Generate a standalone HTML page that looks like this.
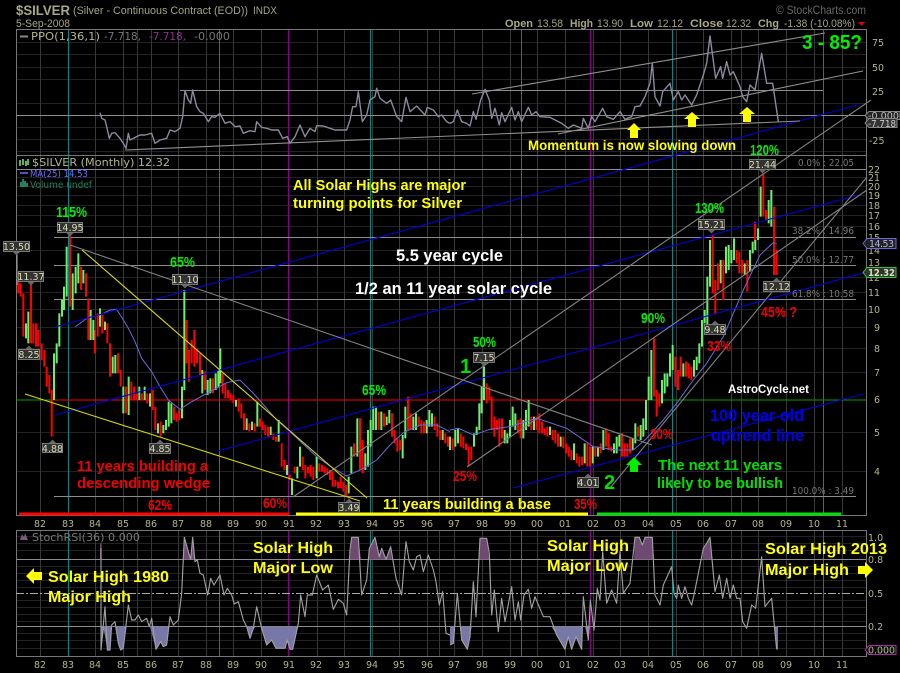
<!DOCTYPE html>
<html><head><meta charset="utf-8"><title>$SILVER</title>
<style>
html,body{margin:0;padding:0;background:#000;width:900px;height:673px;overflow:hidden}
svg{display:block}
text{font-family:"Liberation Sans",sans-serif}
.s{font-family:"DejaVu Sans",sans-serif;font-size:9.5px;fill:#b4b48c}
.h{font-size:11px;fill:#a4a484}
.f{font-family:"DejaVu Sans",sans-serif;font-size:9.5px;fill:#777}
.g{fill:#00f000;font-weight:bold;font-size:14.5px}
.r{fill:#f00000;font-weight:bold;font-size:14.5px}
.y{fill:#ffff00;font-weight:bold;font-size:14.5px}
.y2{fill:#ffff00;font-weight:bold;font-size:15.5px}
.t{font-family:"DejaVu Sans",sans-serif;font-size:9.5px;fill:#ddddb4;text-anchor:middle}
.bx{fill:#333;stroke:#777;stroke-width:1}
</style></head><body>
<svg width="900" height="673" viewBox="0 0 900 673" xmlns="http://www.w3.org/2000/svg">
<rect width="900" height="673" fill="#000"/>

<!-- minor horizontal grid -->
<path fill="none" stroke="#222" d="M16 42.5H866M16 54.5H866M16 67.5H866M16 79.5H866M16 103.5H866M16 127.5H866M16 139.5H866M16 151.5H866
M16 177.5H866M16 186.5H866M16 195.5H866M16 205.5H866M16 215.5H866M16 226.5H866M16 250.5H866M16 277.5H866M16 292.5H866M16 309.5H866M16 327.5H866M16 348.5H866M16 372.5H866M16 432.5H866M16 471.5H866
M16 536.5H866M16 543.5H866M16 550.5H866M16 566.5H866M16 573.5H866M16 580.5H866M16 587.5H866M16 600.5H866M16 607.5H866M16 614.5H866M16 621.5H866M16 633.5H866M16 640.5H866M16 648.5H866"/>
<!-- vertical grid -->
<path fill="none" stroke="#383838" d="M40.5 29V515M95.5 29V515M123.5 29V515M151.5 29V515M178.5 29V515M206.5 29V515M233.5 29V515M261.5 29V515M317.5 29V515M344.5 29V515M372.5 29V515M399.5 29V515M427.5 29V515M454.5 29V515M482.5 29V515M510.5 29V515M537.5 29V515M565.5 29V515M593.5 29V515M620.5 29V515M648.5 29V515M676.5 29V515M703.5 29V515M731.5 29V515M758.5 29V515M786.5 29V515M814.5 29V515M842.5 29V515
M40.5 530V656M95.5 530V656M123.5 530V656M151.5 530V656M178.5 530V656M206.5 530V656M233.5 530V656M261.5 530V656M317.5 530V656M344.5 530V656M372.5 530V656M399.5 530V656M427.5 530V656M454.5 530V656M482.5 530V656M510.5 530V656M537.5 530V656M565.5 530V656M593.5 530V656M620.5 530V656M648.5 530V656M676.5 530V656M703.5 530V656M731.5 530V656M758.5 530V656M786.5 530V656M814.5 530V656M842.5 530V656"/>
<!-- teal / purple cycle verticals -->
<path fill="none" stroke="#008888" d="M68.5 29V515M219.5 29V515M370.5 29V515M521.5 29V515M672.5 29V515M823.5 29V515M68.5 530V656M219.5 530V656M370.5 530V656M521.5 530V656M672.5 530V656M823.5 530V656"/>
<path fill="none" stroke="#880088" d="M137.5 29V515M288.5 29V515M439.5 29V515M590.5 29V515M741.5 29V515M137.5 530V656M288.5 530V656M439.5 530V656M590.5 530V656M741.5 530V656"/>

<!-- panel frames -->
<path fill="none" stroke="#777" d="M16.5 29.5H866.5V155.5H16.5ZM16.5 155.5V515.5H866.5V155.5M16.5 530.5H866.5V656.5H16.5Z"/>
<!-- horizontal levels -->
<path fill="none" stroke="#8c8c8c" d="M180 90.5H823M16 115.5H866M16 169.5H866M54 237.5H856M54 265.5H856M54 299.5H856M54 496.5H856M16 559.5H866M16 626.5H866"/>
<path fill="none" stroke="#aaa" stroke-dasharray="8 2 2 2" d="M16 593.5H866"/>
<path stroke="#00a000" d="M16 400H53M647 400H866"/>
<path stroke="#ff0000" d="M53 400H647"/>

<!-- year bars -->
<path stroke="#ff0000" stroke-width="3" d="M19 514H289"/>
<path stroke="#ffff00" stroke-width="3" d="M296 514H588"/>
<path stroke="#00e000" stroke-width="3" d="M597 514H841"/>

<!-- left candles -->
<path stroke="#aaa" d="M17 252V285"/>
<g transform="translate(0,230) scale(.33333)" fill="none" stroke-width="6">
<path stroke="#ff0000" d="M55 150V190M62 160V200M70 190V320M93 165V340M100 280V340M108 280V350M115 300V350M125 340V390M133 360V410M140 410V470M148 435V490M155 480V620M210 5V230M243 110V180M258 130V200M265 205V330M285 300V370M293 250V320M307 255V310M322 280V340M330 340V440M354 370V430M362 420V470M378 470V550M394 455V510M402 470V510M410 490V510M426 490V510M442 490V520M458 480V540M466 530V600M482 575V620M522 530V570M530 550V575M538 540V570M560 270V400M567 360V455M575 330V400M583 300V410M591 355V400M600 370V435M615 425V480M639 445V490M668 430V490M676 460V505M684 480V505M692 490V510M700 495V520M716 505V545M724 520V565M732 550V600M748 580V605M764 580V605M780 565V590M788 575V600M796 585V615M804 590V620M820 610V630M828 620V635M845 640V710M853 690V720M869 735V750M884 710V730M908 680V720M916 705V745M924 710V730M932 705V740M940 710V750M958 700V725M966 705V725M974 710V730M982 715V735M990 720V750M998 725V770M1006 750V770M1014 755V775M1022 740V775M1030 755V785M1038 765V800M1062 640V680M1080 565V720M1088 630V730M1136 545V600M1152 550V590M1176 550V620M1184 600V640M1192 625V665M1200 630V660M1224 500V600M1232 550V600M1256 560V590M1264 570V610M1272 575V610M1304 560V600M1312 580V620M1320 600V630M1336 610V640M1344 620V650"/>
<path stroke="#6cf06c" d="M78 280V325M85 245V340M162 370V510M170 340V400M178 250V350M186 210V260M192 170V240M200 50V200M218 130V240M227 110V190M235 70V160M250 120V160M272 240V330M280 270V330M300 235V290M315 275V300M338 380V430M346 375V430M370 470V550M386 440V555M418 470V510M434 470V510M450 490V530M474 580V610M490 585V610M498 570V600M506 515V590M514 520V580M546 470V565M553 180V480M607 420V490M623 450V495M631 445V490M647 430V480M655 420V470M661 355V460M708 510V530M740 565V600M756 575V600M772 515V590M812 590V615M836 570V635M861 705V735M876 745V795M892 710V745M900 650V710M950 680V745M1046 740V790M1054 650V730M1072 565V680M1096 670V720M1104 600V710M1112 570V650M1120 530V600M1128 530V600M1144 545V600M1160 560V585M1168 540V580M1208 615V685M1216 530V625M1240 560V600M1248 550V600M1280 570V610M1288 540V590M1296 550V590M1328 600V630"/>
<path stroke="#6a6ad8" stroke-width="3" d="M226 290L265 262 300 255 330 240 350 238 370 270 385 295 405 335 425 385 455 425 480 470 505 510 540 538 575 515 640 480 680 458 720 450 765 495 830 570 870 605 950 680 1000 715 1040 738 1085 718 1130 690 1170 645 1210 608 1260 585 1310 585 1350 605"/>
</g>
<!-- right candles -->
<g transform="translate(450,230) scale(.33333)" fill="none" stroke-width="6">
<path stroke="#ff0000" d="M8 625V660M32 610V650M40 620V655M48 640V660M56 650V710M64 650V690M110 460V520M118 470V510M125 500V600M133 560V620M141 570V600M148 565V650M156 565V625M204 570V610M212 565V625M244 560V600M260 560V600M268 550V610M276 575V610M284 595V615M292 590V620M308 600V630M316 600V640M324 610V650M340 620V655M348 640V670M356 650V680M364 660V690M380 670V700M388 680V710M396 680V705M412 640V710M420 650V710M436 650V680M452 640V670M468 595V650M476 610V660M484 650V665M516 610V680M524 640V680M532 640V680M540 625V670M564 590V620M612 325V500M620 480V560M628 490V530M676 380V470M684 420V480M692 380V440M708 395V440M716 400V445M724 410V450M788 15V190M796 150V250M804 100V180M820 90V210M860 60V100M868 65V130M876 90V130M892 90V185M915 -25V40M940 -170V-40M948 -60V-30M972 -70V135M980 60V135"/>
<path stroke="#6cf06c" d="M0 620V660M16 600V650M24 595V640M72 610V650M80 590V615M88 520V600M95 470V550M102 410V510M164 600V640M172 610V640M180 570V620M188 530V590M196 550V600M220 570V625M228 540V600M236 510V590M252 560V600M300 590V615M332 620V650M372 640V690M404 640V700M428 650V700M444 650V680M460 600V660M492 640V670M500 620V670M508 615V650M548 625V660M556 580V640M572 585V630M580 565V620M588 510V600M596 440V510M604 360V510M636 450V520M644 430V490M652 430V470M660 370V440M668 345V420M700 400V440M732 390V440M740 380V420M748 340V400M756 270V350M764 240V280M772 140V300M780 30V170M812 90V160M828 50V130M836 45V120M844 60V100M852 25V90M884 100V135M900 60V125M908 35V70M916 30V60M924 -5V30M932 -130V-40M956 -90V-20M964 -120V-10"/>
<path stroke="#6a6ad8" stroke-width="3" d="M0 600L25 595 70 615 120 598 180 590 260 565 350 595 430 650 500 660 550 660 590 625 640 570 680 520 730 450 770 400 820 320 880 180 930 75 970 38 980 40"/>
</g>

<!-- trend lines -->
<g fill="none" stroke-width="1.1">
<path stroke="#0000d8" d="M55 327L857 105M55 415L858 195M218 451L863 273M513 488L863 394"/>
<path stroke="#808080" d="M70 245L652 445M293 497L871 100M467 467L867 190M610 488L867 177"/>
<path stroke="#d8d800" d="M82 250L367 498M25 394L360 501"/>
<path stroke="#909090" d="M125 150L800 121M472 94L825 33M558 134L863 71"/>
</g>

<!-- PPO -->
<g fill="none" stroke="#8a8a9c" stroke-linejoin="round">
<path transform="scale(.33333)" stroke-width="4.2" d="M300 338L305 355 315 360 320 380 328 415 335 400 345 398 360 415 370 430 378 445 385 400 390 420 410 410 420 405 435 405 455 400 465 430 480 420 500 415 510 390 525 395 540 385 548 350 555 272 565 300 572 310 578 270 590 320 600 335 610 340 625 365 635 350 645 352 660 340 675 370 690 365 705 380 720 378 730 400 750 392 765 395 770 365 785 382 800 385 815 390 835 390 848 415 862 410 870 430 885 410 900 375 915 410 930 385 945 395 950 377 970 378 990 385 1005 390 1040 390 1050 360 1058 320 1068 320 1075 275 1087 365 1100 345 1110 300 1125 290 1130 265 1140 295 1160 310 1172 300 1190 350 1205 365 1218 292 1230 335 1250 318 1275 345 1282 322 1300 330 1315 350 1325 345 1340 365 1350 370"/>
<path transform="translate(450,0) scale(.33333)" stroke-width="4.2" d="M0 370L10 365 22 330 35 365 50 370 60 378 70 335 78 358 92 300 105 268 118 300 125 355 135 325 148 375 155 338 165 365 185 322 195 360 205 335 215 365 235 322 245 345 258 335 270 350 300 352 335 370 355 385 370 375 395 385 400 355 415 385 425 350 435 365 458 325 470 350 490 358 510 335 525 358 545 350 555 320 570 318 585 290 600 250 607 190 615 290 630 318 638 275 660 250 670 300 685 275 695 300 705 285 725 315 740 285 760 225 770 190 780 108 797 235 812 200 818 235 830 185 840 225 850 215 870 260 878 290 890 305 900 255 915 270 935 160 950 250 968 250 985 365"/>
</g>

<!-- Stoch -->
<g transform="translate(0,520) scale(.33333)">
<path fill="#7878a8" d="M303 320V390L313 320ZM310 320L322 390 330 390 335 320ZM348 320L355 370 362 390 370 385 380 320ZM450 320L468 388 482 365 490 380 500 375 507 320ZM740 320L750 355 760 325 770 320ZM783 320L800 375 815 360 828 385 855 385 862 360 870 388 878 388 893 320Z"/>
<path fill="#6e4a72" d="M300 70H305V118H300ZM548 118L553 52 565 95 572 118 578 52 585 118ZM1050 118L1055 52 1075 52 1083 118ZM1105 118L1108 85 1125 52 1138 110 1145 85 1158 118 1172 80 1176 118Z"/>
<path fill="none" stroke="#a0a0a0" stroke-width="3.4" stroke-linejoin="round" d="M303 85L303 390 315 260 322 390 330 390 335 315 345 305 355 370 362 390 370 385 385 255 395 300 405 300 415 285 425 305 440 295 448 320 455 295 468 388 482 365 490 380 500 375 510 290 520 315 535 300 545 220 553 52 565 95 572 118 578 52 585 125 592 120 600 160 610 165 623 225 632 175 642 195 660 165 672 225 682 205 695 225 703 252 715 245 730 300 740 320 750 355 760 325 770 260 785 325 800 375 815 360 828 385 855 385 862 360 870 388 878 388 895 310 902 225 915 290 922 225 937 225 950 165 968 210 985 195 1000 268 1015 238 1030 250 1040 285 1050 90 1055 52 1075 52 1085 225 1100 180 1108 85 1125 52 1138 110 1145 85 1158 118 1172 80 1188 175 1205 225 1218 65 1228 125 1240 150 1250 110 1260 105 1270 155 1285 105 1300 150 1308 185 1318 255 1328 215 1338 340 1350 345"/>
</g>
<g transform="translate(450,520) scale(.33333)">
<path fill="#7878a8" d="M0 320V375L10 370 13 320ZM30 320L35 360 52 388 60 350 65 320ZM305 320L320 345 345 388 355 350 365 388 378 350 395 388 397 320ZM405 320L415 360 420 320ZM972 320L980 388 984 388V320Z"/>
<path fill="#6e4a72" d="M85 118L90 55 110 55 118 118ZM552 118L555 52 568 52 577 75 585 52 607 52 612 118ZM757 118L760 85 770 70 780 52 787 118Z"/>
<path fill="none" stroke="#a0a0a0" stroke-width="3.4" stroke-linejoin="round" d="M0 375L10 370 22 220 35 360 52 388 60 350 70 185 78 290 90 55 110 55 118 100 125 285 133 210 145 335 155 235 165 305 185 200 195 300 205 245 212 300 222 225 235 208 245 265 255 230 280 290 300 290 320 345 345 388 355 350 365 388 378 350 395 388 400 230 415 360 421 240 432 330 442 205 450 240 458 95 470 250 485 210 500 250 510 95 520 220 540 190 555 52 568 52 577 75 585 52 607 52 615 225 630 255 640 195 665 140 672 220 680 235 685 195 695 235 705 200 715 235 725 255 735 210 760 85 770 70 780 52 795 215 808 165 818 235 830 175 840 235 850 195 860 235 870 235 878 305 890 325 905 255 917 265 935 110 945 260 965 235 980 388"/>
</g>

<!-- Header -->
<text x="16" y="15" font-weight="bold" font-size="13.5" fill="#a8a884" textLength="54" lengthAdjust="spacingAndGlyphs">$SILVER</text>
<text x="73" y="14" class="h" textLength="175" lengthAdjust="spacingAndGlyphs">(Silver - Continuous Contract (EOD))</text>
<text x="253" y="14" class="h" font-size="10" textLength="24" lengthAdjust="spacingAndGlyphs">INDX</text>
<text x="16" y="27" class="h" textLength="54" lengthAdjust="spacingAndGlyphs">5-Sep-2008</text>
<text x="776" y="14" class="h" style="fill:#666;font-size:12px" textLength="90" lengthAdjust="spacingAndGlyphs">© StockCharts.com</text>
<g font-size="11" fill="#a8a884" font-weight="bold">
<text x="505" y="27" textLength="28" lengthAdjust="spacingAndGlyphs">Open</text><text x="570" y="27" textLength="23" lengthAdjust="spacingAndGlyphs">High</text><text x="630" y="27" textLength="23" lengthAdjust="spacingAndGlyphs">Low</text><text x="690" y="27" textLength="33" lengthAdjust="spacingAndGlyphs">Close</text><text x="758" y="27" textLength="21" lengthAdjust="spacingAndGlyphs">Chg</text>
</g>
<text class="h" x="537" y="27" textLength="26" lengthAdjust="spacingAndGlyphs">13.58</text><text class="h" x="597" y="27" textLength="26" lengthAdjust="spacingAndGlyphs">13.90</text><text class="h" x="657" y="27" textLength="26" lengthAdjust="spacingAndGlyphs">12.12</text><text class="h" x="726" y="27" textLength="25" lengthAdjust="spacingAndGlyphs">12.32</text><text class="h" x="784" y="27" textLength="71" lengthAdjust="spacingAndGlyphs">-1.38 (-10.08%)</text>
<path fill="#e00000" d="M858 22H865L861.5 26Z"/>

<!-- Legends -->
<path stroke="#888" stroke-width="2" d="M20 36.5H28"/>
<text x="31" y="40" class="s" style="font-size:10.5px" textLength="69" lengthAdjust="spacingAndGlyphs">PPO(1,36,1)</text>
<text x="104" y="40" class="f" style="font-size:10.5px" textLength="37" lengthAdjust="spacingAndGlyphs">-7.718,</text>
<text x="149" y="40" class="s" style="fill:#903090;font-size:10.5px" textLength="37" lengthAdjust="spacingAndGlyphs">-7.718,</text>
<text x="194" y="40" class="f" style="font-size:10.5px" textLength="36" lengthAdjust="spacingAndGlyphs">-0.000</text>
<path stroke="#80ff80" stroke-width="1.4" fill="none" d="M20 160V166M23 159V165M26 161V166M28 159V165"/>
<text x="32" y="166" class="s" style="font-size:10.5px" textLength="138" lengthAdjust="spacingAndGlyphs">$SILVER (Monthly) 12.32</text>
<path stroke="#6a6aff" stroke-width="1.5" d="M20 173H28"/>
<text x="30" y="177" class="s" style="fill:#6a6aff" textLength="58" lengthAdjust="spacingAndGlyphs">MA(25) 14.53</text>
<path fill="#208060" d="M20 187V182H22V179H24V181H26V183H28V187Z"/>
<text x="30" y="188" class="s" style="fill:#208060" textLength="62" lengthAdjust="spacingAndGlyphs">Volume undef</text>
<path fill="#7a5a80" d="M20 540L22 534 24 537 25 533 28 540Z"/>
<text x="32" y="541" class="f" style="font-size:10.5px" textLength="108" lengthAdjust="spacingAndGlyphs">StochRSI(36) 0.000</text>

<!-- Right axes -->
<g>
<text class="s" x="872" y="46">75</text><text class="s" x="872" y="71">50</text><text class="s" x="872" y="95">25</text><text class="s" x="869" y="144">-25</text>
<text class="s" x="868" y="173">22</text><text class="s" x="868" y="181">21</text><text class="s" x="868" y="190">20</text><text class="s" x="868" y="199">19</text><text class="s" x="868" y="209">18</text><text class="s" x="868" y="219">17</text><text class="s" x="868" y="230">16</text><text class="s" x="868" y="241">15</text><text class="s" x="868" y="254">14</text><text class="s" x="868" y="266">13</text><text class="s" x="868" y="281">12</text><text class="s" x="868" y="296">11</text><text class="s" x="868" y="313">10</text>
<text class="s" x="874" y="331">9</text><text class="s" x="874" y="352">8</text><text class="s" x="874" y="376">7</text><text class="s" x="874" y="403">6</text><text class="s" x="874" y="436">5</text><text class="s" x="874" y="475">4</text>
<text class="s" x="868" y="541">1.0</text><text class="s" x="868" y="563">0.8</text><text class="s" x="868" y="597">0.5</text><text class="s" x="868" y="630">0.2</text>
</g>
<!-- Right tags -->
<path fill="#222" stroke="#888" d="M869 111.5H900V119.5H869L865 115.5Z"/>
<text x="868" y="119" class="s" style="fill:#bbb" textLength="31" lengthAdjust="spacingAndGlyphs">-0.000</text>
<path fill="#333" stroke="#888" d="M869 118.5H897V127.5H869L865 123Z"/>
<text x="868" y="127" class="s" style="fill:#ccc" textLength="28" lengthAdjust="spacingAndGlyphs">-7.718</text>
<path fill="#222" stroke="#6a6ad8" d="M867 238.5H896V248.5H867L863 243.5Z"/>
<text x="869" y="247" class="s" style="fill:#b0b0e0" textLength="25">14.53</text>
<path fill="#2a3a2a" stroke="#40c040" d="M867 267.5H896V277.5H867L863 272.5Z"/>
<text x="868" y="276" class="s" style="fill:#e0e0c0;font-weight:bold" textLength="27" lengthAdjust="spacingAndGlyphs">12.32</text>
<path fill="#111" stroke="#a030a0" d="M869 645.5H896V654.5H869L865 650Z"/>
<text x="868" y="653.5" class="s" textLength="27" lengthAdjust="spacingAndGlyphs">0.000</text>

<!-- Year labels -->
<g>
<text class="s" x="34" y="527">82</text><text class="s" x="62" y="527">83</text><text class="s" x="89" y="527">84</text><text class="s" x="117" y="527">85</text><text class="s" x="145" y="527">86</text><text class="s" x="172" y="527">87</text><text class="s" x="200" y="527">88</text><text class="s" x="227" y="527">89</text><text class="s" x="255" y="527">90</text><text class="s" x="283" y="527">91</text><text class="s" x="310" y="527">92</text><text class="s" x="338" y="527">93</text><text class="s" x="366" y="527">94</text><text class="s" x="393" y="527">95</text><text class="s" x="421" y="527">96</text><text class="s" x="448" y="527">97</text><text class="s" x="476" y="527">98</text><text class="s" x="504" y="527">99</text><text class="s" x="531" y="527">00</text><text class="s" x="559" y="527">01</text><text class="s" x="587" y="527">02</text><text class="s" x="614" y="527">03</text><text class="s" x="642" y="527">04</text><text class="s" x="670" y="527">05</text><text class="s" x="697" y="527">06</text><text class="s" x="725" y="527">07</text><text class="s" x="752" y="527">08</text><text class="s" x="780" y="527">09</text><text class="s" x="808" y="527">10</text><text class="s" x="836" y="527">11</text>
</g>
<g>
<text class="s" x="34" y="668">82</text><text class="s" x="62" y="668">83</text><text class="s" x="89" y="668">84</text><text class="s" x="117" y="668">85</text><text class="s" x="145" y="668">86</text><text class="s" x="172" y="668">87</text><text class="s" x="200" y="668">88</text><text class="s" x="227" y="668">89</text><text class="s" x="255" y="668">90</text><text class="s" x="283" y="668">91</text><text class="s" x="310" y="668">92</text><text class="s" x="338" y="668">93</text><text class="s" x="366" y="668">94</text><text class="s" x="393" y="668">95</text><text class="s" x="421" y="668">96</text><text class="s" x="448" y="668">97</text><text class="s" x="476" y="668">98</text><text class="s" x="504" y="668">99</text><text class="s" x="531" y="668">00</text><text class="s" x="559" y="668">01</text><text class="s" x="587" y="668">02</text><text class="s" x="614" y="668">03</text><text class="s" x="642" y="668">04</text><text class="s" x="670" y="668">05</text><text class="s" x="697" y="668">06</text><text class="s" x="725" y="668">07</text><text class="s" x="752" y="668">08</text><text class="s" x="780" y="668">09</text><text class="s" x="808" y="668">10</text><text class="s" x="836" y="668">11</text>
</g>

<!-- Price boxes -->
<path fill="#666" d="M66 232.5H74L70 236.5ZM12.5 251.5H20.5L16.5 255.5ZM27 281.5H35L31 285.5ZM181 284.5H189L185 288.5ZM480 362.5H488L484 366.5ZM707.5 229.5H715.5L711.5 233.5ZM758.5 169.5H766.5L762.5 173.5ZM25 349.5H33L29 345.5ZM48.5 443.5H56.5L52.5 439.5ZM156 443.5H164L160 439.5ZM345 502.5H353L349 498.5ZM584 477.5H592L588 473.5ZM711 324.5H719L715 320.5ZM772.5 281.5H780.5L776.5 277.5Z"/>
<g>
<rect class="bx" x="57.5" y="222.5" width="25" height="10"/><text class="t" x="70" y="231">14.95</text>
<rect class="bx" x="3.5" y="241.5" width="26" height="10"/><text class="t" x="16.5" y="250">13.50</text>
<rect class="bx" x="18.5" y="271.5" width="25" height="10"/><text class="t" x="31" y="280">11.37</text>
<rect class="bx" x="18.5" y="349.5" width="21" height="10"/><text class="t" x="29" y="358">8.25</text>
<rect class="bx" x="42.5" y="443.5" width="20" height="9"/><text class="t" x="52.5" y="452">4.88</text>
<rect class="bx" x="149.5" y="443.5" width="21" height="10"/><text class="t" x="160" y="452">4.85</text>
<rect class="bx" x="172.5" y="274.5" width="25" height="10"/><text class="t" x="185" y="283">11.10</text>
<rect class="bx" x="338.5" y="502.5" width="21" height="10"/><text class="t" x="349" y="511">3.49</text>
<rect class="bx" x="473.5" y="352.5" width="21" height="10"/><text class="t" x="484" y="361">7.15</text>
<rect class="bx" x="577.5" y="477.5" width="21" height="10"/><text class="t" x="588" y="486">4.01</text>
<rect class="bx" x="704.5" y="324.5" width="21" height="10"/><text class="t" x="715" y="333">9.48</text>
<rect class="bx" x="763.5" y="281.5" width="26" height="10"/><text class="t" x="776.5" y="290">12.12</text>
<rect class="bx" x="698.5" y="219.5" width="26" height="10"/><text class="t" x="711.5" y="228">15.21</text>
<rect class="bx" x="749.5" y="159.5" width="26" height="10"/><text class="t" x="762.5" y="168">21.44</text>
</g>

<!-- Fib labels -->
<text class="f" x="798" y="166" textLength="56" lengthAdjust="spacingAndGlyphs">0.0% : 22.05</text>
<text class="f" x="792" y="234" textLength="62" lengthAdjust="spacingAndGlyphs">38.2% : 14.96</text>
<text class="f" x="792" y="263" textLength="62" lengthAdjust="spacingAndGlyphs">50.0% : 12.77</text>
<text class="f" x="792" y="297" textLength="62" lengthAdjust="spacingAndGlyphs">61.8% : 10.58</text>
<text class="f" x="792" y="494" textLength="62" lengthAdjust="spacingAndGlyphs">100.0% : 3.49</text>

<!-- Annotations -->
<text x="802" y="49" fill="#00f000" font-weight="bold" font-size="20" textLength="60" lengthAdjust="spacingAndGlyphs">3 - 85?</text>
<text x="528" y="150" class="y" style="font-size:13.5px" textLength="208" lengthAdjust="spacingAndGlyphs">Momentum is now slowing down</text>
<text x="293" y="190" class="y" textLength="173" lengthAdjust="spacingAndGlyphs">All Solar Highs are major</text>
<text x="293" y="208" class="y" textLength="169" lengthAdjust="spacingAndGlyphs">turning points for Silver</text>
<text x="396" y="261" fill="#fff" font-weight="bold" font-size="16.5" textLength="107" lengthAdjust="spacingAndGlyphs">5.5 year cycle</text>
<text x="355" y="294" fill="#fff" font-weight="bold" font-size="16.5" textLength="197" lengthAdjust="spacingAndGlyphs">1/2 an 11 year solar cycle</text>
<text x="56" y="217" class="g" textLength="31" lengthAdjust="spacingAndGlyphs">115%</text>
<text x="170" y="267" class="g" textLength="25" lengthAdjust="spacingAndGlyphs">65%</text>
<text x="362" y="395" class="g" textLength="24" lengthAdjust="spacingAndGlyphs">65%</text>
<text x="473" y="347" class="g" textLength="23" lengthAdjust="spacingAndGlyphs">50%</text>
<text x="641" y="323" class="g" textLength="24" lengthAdjust="spacingAndGlyphs">90%</text>
<text x="695" y="213" class="g" textLength="29" lengthAdjust="spacingAndGlyphs">130%</text>
<text x="750" y="155" class="g" textLength="29" lengthAdjust="spacingAndGlyphs">120%</text>
<text x="460" y="373" fill="#00e000" font-weight="bold" font-size="20">1</text>
<text x="604" y="489" fill="#00e000" font-weight="bold" font-size="20">2</text>
<text x="761" y="317" class="r" textLength="36" lengthAdjust="spacingAndGlyphs">45% ?</text>
<text x="707" y="351" class="r" textLength="24" lengthAdjust="spacingAndGlyphs">33%</text>
<text x="650" y="439" class="r" textLength="23" lengthAdjust="spacingAndGlyphs">30%</text>
<text x="453" y="481" class="r" textLength="24" lengthAdjust="spacingAndGlyphs">25%</text>
<text x="574" y="509" class="r" textLength="23" lengthAdjust="spacingAndGlyphs">35%</text>
<text x="148" y="510" class="r" textLength="24" lengthAdjust="spacingAndGlyphs">62%</text>
<text x="263" y="508" class="r" textLength="24" lengthAdjust="spacingAndGlyphs">60%</text>
<text x="77" y="471" class="r" style="font-size:15px" textLength="131" lengthAdjust="spacingAndGlyphs">11 years building a</text>
<text x="77" y="488" class="r" style="font-size:15px" textLength="133" lengthAdjust="spacingAndGlyphs">descending wedge</text>
<text x="383" y="509" class="y" textLength="168" lengthAdjust="spacingAndGlyphs">11 years building a base</text>
<text x="728" y="393" fill="#fff" font-weight="bold" font-size="11.5" textLength="81" lengthAdjust="spacingAndGlyphs">AstroCycle.net</text>
<text x="710" y="421" fill="#0000f0" font-weight="bold" font-size="17" textLength="94" lengthAdjust="spacingAndGlyphs">100 year old</text>
<text x="711" y="441" fill="#0000f0" font-weight="bold" font-size="17" textLength="93" lengthAdjust="spacingAndGlyphs">uptrend line</text>
<text x="658" y="470" fill="#00e000" font-weight="bold" font-size="15" textLength="124" lengthAdjust="spacingAndGlyphs">The next 11 years</text>
<text x="657" y="488" fill="#00e000" font-weight="bold" font-size="15" textLength="126" lengthAdjust="spacingAndGlyphs">likely to be bullish</text>

<!-- Arrows -->
<path fill="#00f000" d="M634 457L642 465H638V472H630V465H626Z"/>
<path fill="#ffff00" d="M634 123L641 130H638V138H630V130H627ZM692 112L700 119H696V127H688V119H684ZM747 107L755 114H751V122H743V114H739ZM26 576L34 568V572H42V580H34V584ZM873 570L865 562V566H858V574H865V578Z"/>

<text x="48" y="582" class="y2" textLength="121" lengthAdjust="spacingAndGlyphs">Solar High 1980</text>
<text x="48" y="602" class="y2" textLength="83" lengthAdjust="spacingAndGlyphs">Major High</text>
<text x="253" y="553" class="y2" textLength="80" lengthAdjust="spacingAndGlyphs">Solar High</text>
<text x="253" y="573" class="y2" textLength="80" lengthAdjust="spacingAndGlyphs">Major Low</text>
<text x="547" y="551" class="y2" textLength="82" lengthAdjust="spacingAndGlyphs">Solar High</text>
<text x="547" y="571" class="y2" textLength="81" lengthAdjust="spacingAndGlyphs">Major Low</text>
<text x="765" y="554" class="y2" textLength="122" lengthAdjust="spacingAndGlyphs">Solar High 2013</text>
<text x="765" y="575" class="y2" textLength="84" lengthAdjust="spacingAndGlyphs">Major High</text>
</svg>
</body></html>
